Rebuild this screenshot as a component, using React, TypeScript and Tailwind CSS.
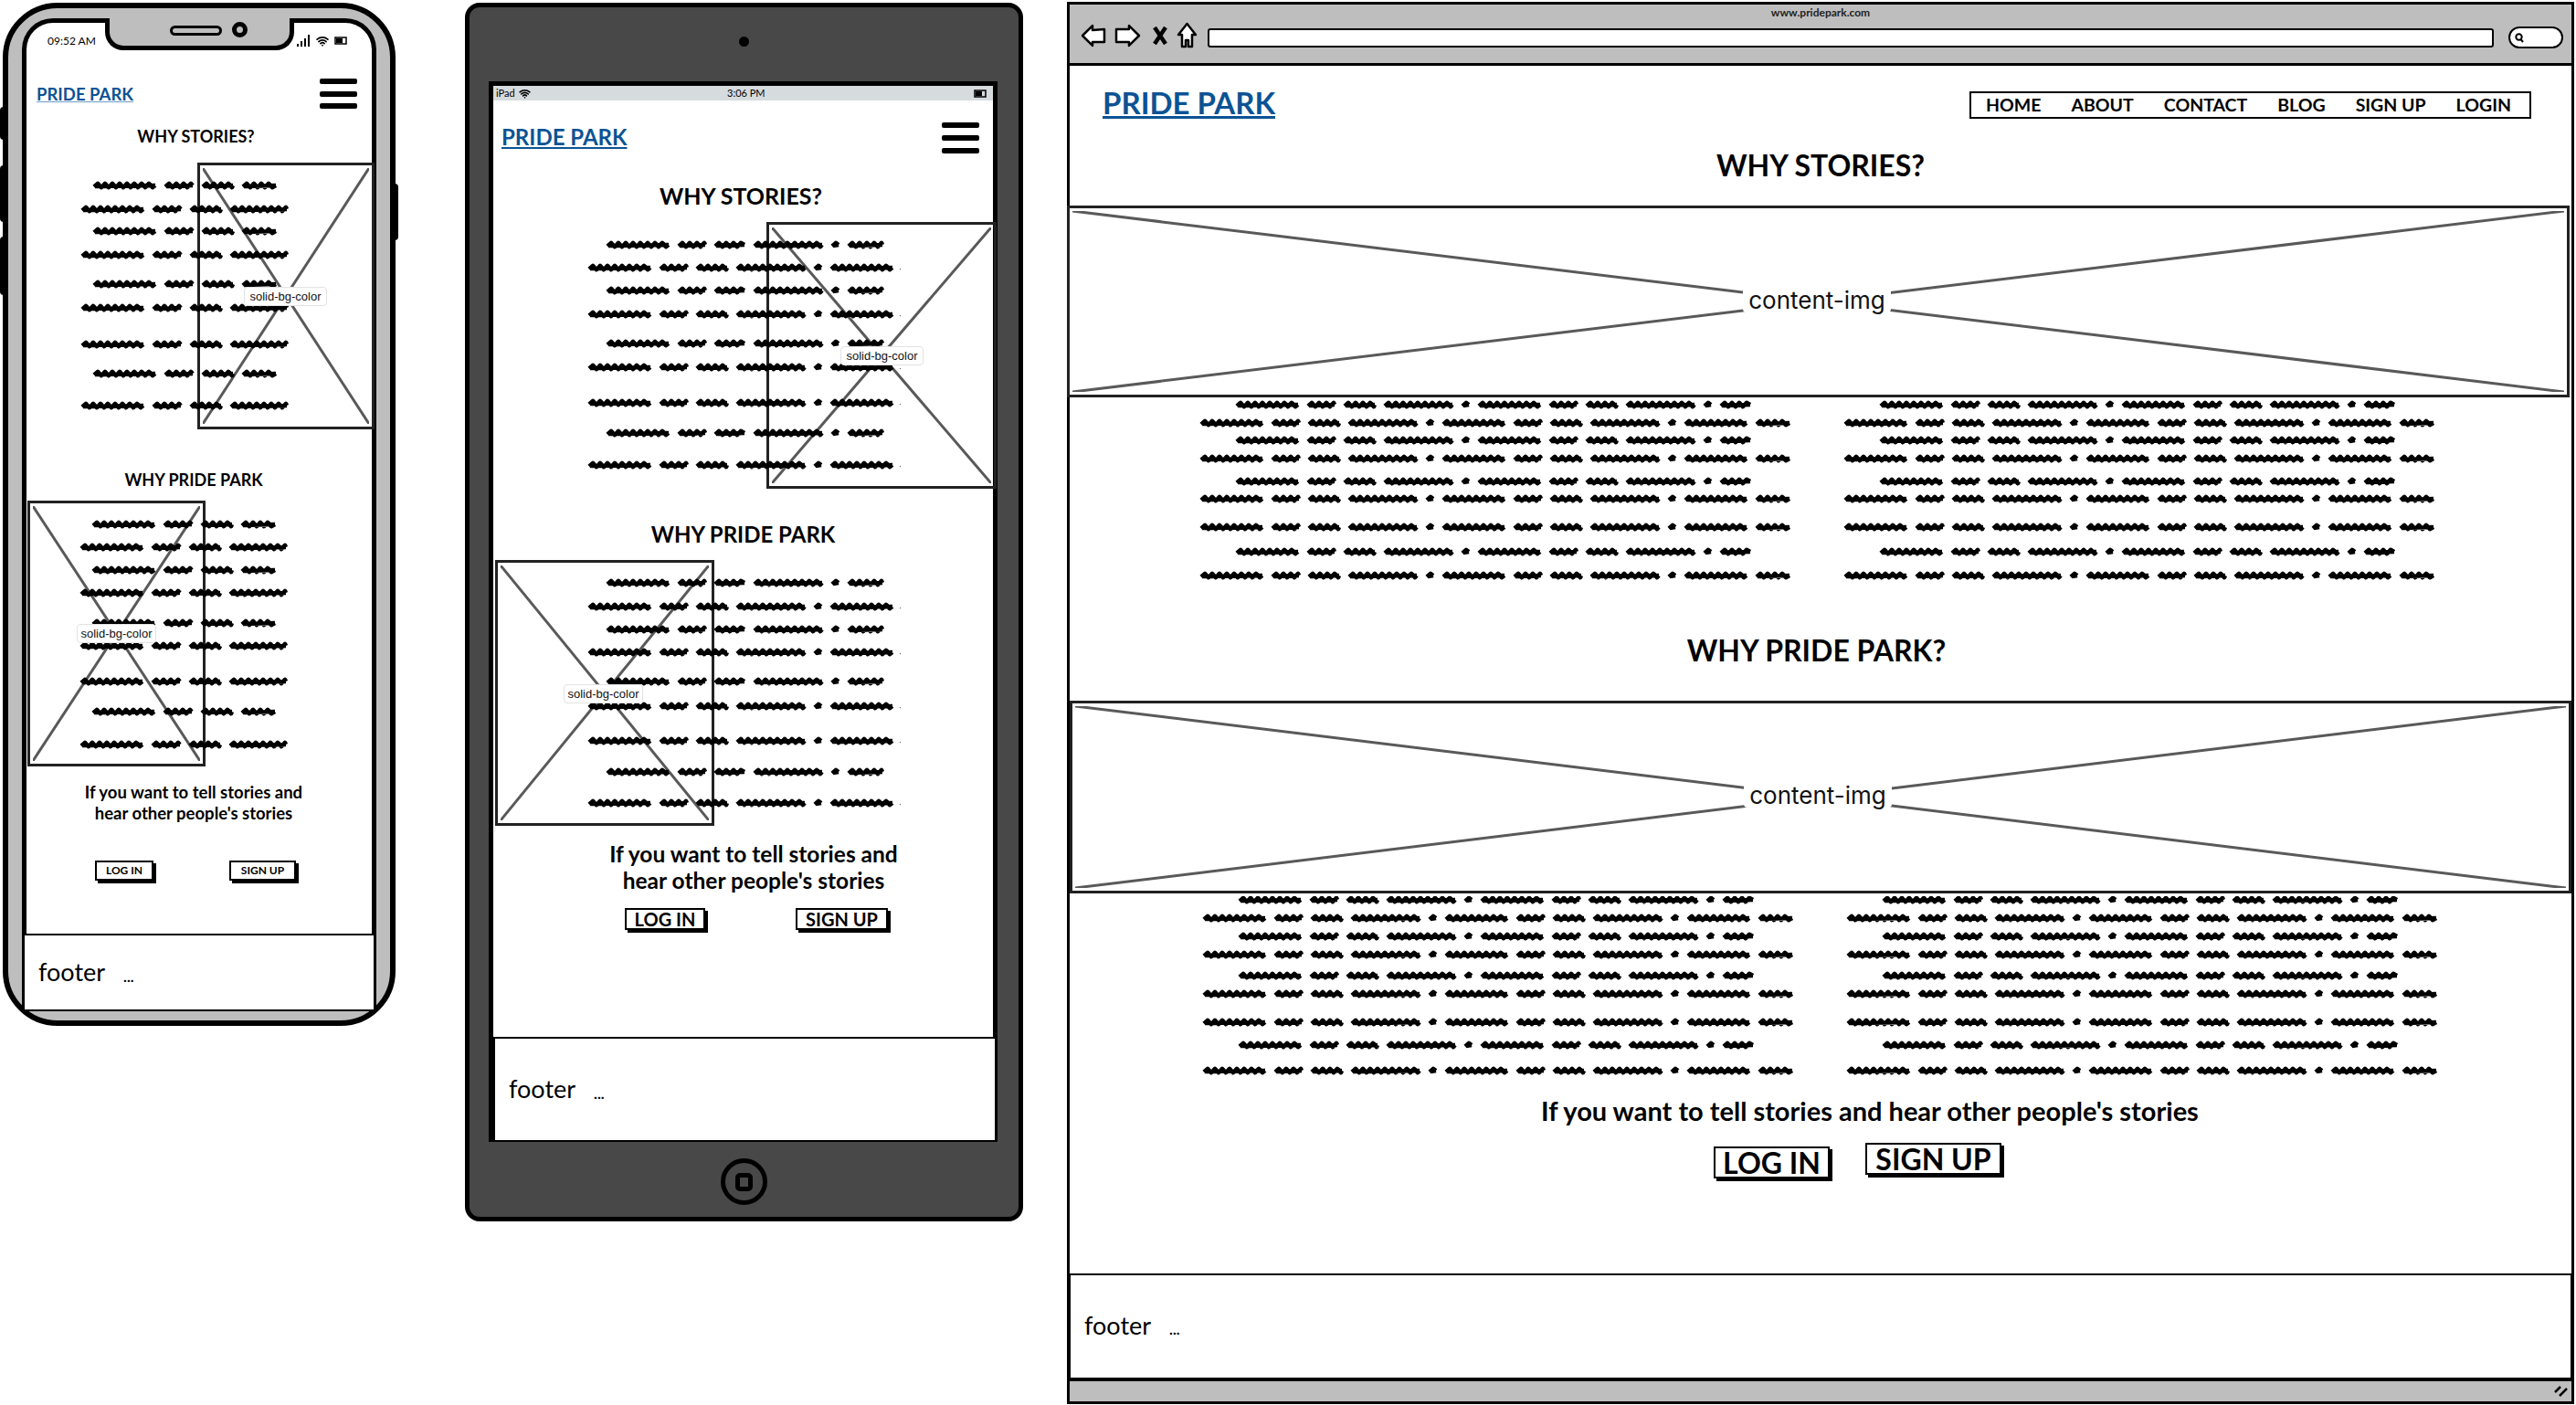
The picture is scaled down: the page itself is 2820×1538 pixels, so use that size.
import { Wifi } from "lucide-react";

const sketch = "font-['Lato',sans-serif]";

const phoneShort = [71, 34, 37, 40];
const phoneLong = [71, 34, 37, 65];
const tabletShort = [71, 33, 36, 78, 11, 41];
const tabletLong = [71, 33, 37, 78, 11, 71, 3];
const webShort = [71, 33, 37, 78, 11, 71, 33, 37, 78, 11, 36];
const webLong = [71, 33, 37, 78, 11, 71, 33, 37, 78, 11, 71, 40];

type ScribbleLine = { y: number; x: number; words: number[] };

// every other line of the greeked text is shorter
const makeLines = (ys: number[], shortX: number, short: number[], long: number[], longAt: number[]) =>
  ys.map((y, i): ScribbleLine =>
    longAt.includes(i) ? { y, x: 0, words: long } : { y, x: shortX, words: short },
  );

const wordPath = (x: number, y: number, w: number) => {
  let d = `M${x} ${y + 1.5}`;
  let up = true;
  for (let p = x + 4; p < x + w; p += 4) {
    d += ` L${p} ${y + (up ? -2.2 : 2.2)}`;
    up = !up;
  }
  // flat stroke under the ticks makes the word read as one blob
  return `${d} L${x + w} ${y} M${x + 1} ${y + 1} L${x + w} ${y}`;
};

const Scribble = ({
  lines,
  width,
  height,
  className,
}: {
  lines: ScribbleLine[];
  width: number;
  height: number;
  className?: string;
}) => (
  <svg width={width} height={height} className={className} fill="none" stroke="#000" strokeWidth={4.5} strokeLinejoin="round">
    {lines.map((line) => {
      let x = line.x;
      return line.words.map((w) => {
        const d = wordPath(x + 2, line.y, w - 4);
        x += w + 7;
        return <path key={`${line.y}-${x}`} d={d} />;
      });
    })}
  </svg>
);

const Placeholder = ({
  label,
  className,
  labelClass,
}: {
  label: string;
  className: string;
  labelClass: string;
}) => (
  <div className={`border-[3px] border-[#222] ${className}`}>
    <svg className="absolute left-[3px] top-[3px] h-[calc(100%-6px)] w-[calc(100%-6px)]" viewBox="0 0 100 100" preserveAspectRatio="none" stroke="#595959" strokeWidth={3}>
      <line x1="0" y1="0" x2="100" y2="100" vectorEffect="non-scaling-stroke" />
      <line x1="100" y1="0" x2="0" y2="100" vectorEffect="non-scaling-stroke" />
    </svg>
    <span className={`absolute z-10 flex items-center justify-center whitespace-nowrap rounded-[4px] border border-[#e2e2e2] bg-white text-[#111] ${labelClass}`}>
      {label}
    </span>
  </div>
);

const Hamburger = ({ className }: { className: string }) => (
  <div className={`flex flex-col justify-between ${className}`}>
    <span className="h-[6px] rounded-[2px] bg-black" />
    <span className="h-[6px] rounded-[2px] bg-black" />
    <span className="h-[6px] rounded-[2px] bg-black" />
  </div>
);

const Logo = ({ className }: { className: string }) => (
  <a className={`font-bold text-[#0b5394] underline ${sketch} ${className}`}>PRIDE PARK</a>
);

const SketchButton = ({ label, className }: { label: string; className: string }) => (
  <button className={`flex items-center justify-center border-2 border-black bg-white font-bold text-black shadow-[3px_3px_0_#000] ${sketch} ${className}`}>
    {label}
  </button>
);

const Footer = ({ className, dots }: { className: string; dots: string }) => (
  <div className={`flex items-center border-2 border-black bg-white text-[27px] text-black ${sketch} ${className}`}>
    <span>footer</span>
    <span className={`self-center text-[16px] font-bold ${dots}`}>...</span>
  </div>
);

const Phone = () => {
  const first = makeLines([9, 35, 59, 85, 117, 143, 183, 215, 250], 13, phoneShort, phoneLong, [1, 3, 5, 6, 8]);
  const second = makeLines([10, 35, 60, 85, 118, 143, 182, 215, 251], 13, phoneShort, phoneLong, [1, 3, 5, 6, 8]);
  return (
    <div className="absolute left-[3px] top-[3px] h-[1120px] w-[430px] rounded-[60px] border-[6px] border-black bg-[#bebebe]">
      {/* side buttons */}
      <span className="absolute -left-[9px] top-[108px] h-[36px] w-[4px] rounded-l bg-black" />
      <span className="absolute -left-[9px] top-[172px] h-[62px] w-[4px] rounded-l bg-black" />
      <span className="absolute -left-[9px] top-[250px] h-[64px] w-[4px] rounded-l bg-black" />
      <span className="absolute -right-[9px] top-[192px] h-[62px] w-[4px] rounded-r bg-black" />

      {/* notch */}
      <div className="absolute left-[106px] top-[11px] z-10 flex h-[35px] w-[207px] items-start justify-center gap-[11px] rounded-b-[20px] border-[5px] border-t-0 border-black bg-[#bebebe] pl-[20px] pt-[8px]">
        <span className="h-[11px] w-[57px] rounded-full border-[3px] border-black bg-[#bebebe]" />
        <span className="-mt-[4px] size-[17px] rounded-full border-[5px] border-black bg-[#bebebe]" />
      </div>

      <div className="ml-[15px] mt-[11px] flex h-[1087px] w-[388px] flex-col rounded-t-[34px] border-[5px] border-b-0 border-black bg-white">
        {/* status bar */}
        <div className="flex h-[38px] items-center justify-between pl-[23px] pr-[26px] pt-[1px] text-black">
          <span className={`text-[12px] ${sketch}`}>09:52 AM</span>
          <div className="flex items-center gap-[6px]">
            <svg width="15" height="13" viewBox="0 0 15 13" fill="#000">
              <rect x="0" y="10" width="2" height="3" />
              <rect x="4" y="7" width="2" height="6" />
              <rect x="8" y="4" width="2" height="9" />
              <rect x="12" y="0" width="2" height="13" />
            </svg>
            <Wifi size={14} strokeWidth={3} />
            <svg width="15" height="9" viewBox="0 0 15 9" fill="none" stroke="#000" strokeWidth="1.5">
              <rect x="1" y="1" width="12" height="7" />
              <rect x="2" y="2" width="7" height="5" fill="#000" stroke="none" />
            </svg>
          </div>
        </div>

        <div className="mt-[23px] flex items-center justify-between pl-[11px] pr-[16px]">
          <Logo className="text-[18.5px] leading-[24px] decoration-[#6d9bc8]" />
          <Hamburger className="h-[33px] w-[41px]" />
        </div>

        <h2 className={`mt-[18px] pr-[7px] text-center text-[18px] font-bold leading-[24px] text-black ${sketch}`}>WHY STORIES?</h2>
        <div className="relative">
          <Placeholder label="solid-bg-color" className="absolute left-[187px] top-[17px] h-[292px] w-[194px]" labelClass="left-[48px] top-[133px] h-[21px] w-[91px] font-['Liberation_Sans',sans-serif] text-[13px]" />
          <Scribble lines={first} width={240} height={260} className="relative ml-[59px] mt-[33px]" />
        </div>

        <h2 className={`mt-[59px] pr-[12px] text-center text-[18px] font-bold leading-[24px] text-black ${sketch}`}>WHY PRIDE PARK</h2>
        <div className="relative">
          <Placeholder label="solid-bg-color" className="absolute left-[1px] top-[11px] h-[291px] w-[195px]" labelClass="left-[51px] top-[132px] h-[21px] w-[87px] font-['Liberation_Sans',sans-serif] text-[13px]" />
          <Scribble lines={second} width={240} height={260} className="relative ml-[58px] mt-[27px]" />
        </div>

        <p className={`mt-[32px] pr-[12px] text-center text-[18.5px] font-bold leading-[23px] text-black ${sketch}`}>
          If you want to tell stories and
          <br />
          hear other people's stories
        </p>

        <div className="ml-[75px] mt-[40px] flex gap-[83px]">
          <SketchButton label="LOG IN" className="h-[22px] w-[64px] text-[12px]" />
          <SketchButton label="SIGN UP" className="h-[22px] w-[73px] text-[12px]" />
        </div>

        <Footer className="-mx-[4px] mt-auto h-[85px] pl-[15px]" dots="ml-[20px] mt-[8px]" />
      </div>
    </div>
  );
};

const Tablet = () => {
  const first = makeLines([6, 31, 56, 82, 114, 140, 179, 212, 247], 20, tabletShort, tabletLong, [1, 3, 5, 6, 8]);
  const second = makeLines([6, 32, 57, 82, 114, 141, 179, 213, 247], 20, tabletShort, tabletLong, [1, 3, 5, 6, 8]);
  return (
    <div className="absolute left-[509px] top-[3px] flex h-[1334px] w-[611px] flex-col rounded-[16px] border-[5px] border-black bg-[#484848]">
      <span className="mx-auto mt-[32px] size-[11px] rounded-full bg-black" />

      <div className="ml-[21px] mt-[38px] flex h-[1161px] w-[557px] flex-col border-[5px] border-b-0 border-black bg-white">
        {/* status bar */}
        <div className="relative flex h-[16px] shrink-0 items-center justify-between bg-[#d6dbde] pl-[3px] pr-[6px] text-[11px] text-black">
          <div className="flex items-center gap-[4px]">
            <span className={sketch}>iPad</span>
            <Wifi size={13} strokeWidth={3} />
          </div>
          <span className={`absolute left-[256px] ${sketch}`}>3:06 PM</span>
          <svg width="15" height="9" viewBox="0 0 15 9" fill="none" stroke="#000" strokeWidth="1.5">
            <rect x="1" y="1" width="12" height="7" />
            <rect x="2" y="2" width="7" height="5" fill="#000" stroke="none" />
          </svg>
        </div>

        <div className="mt-[24px] flex items-center justify-between pl-[9px] pr-[15px]">
          <Logo className="-mt-[3px] text-[24px] leading-[32px]" />
          <Hamburger className="h-[34px] w-[41px]" />
        </div>

        <h2 className={`mt-[30px] pr-[5px] text-center text-[25px] font-bold leading-[32px] text-black ${sketch}`}>WHY STORIES?</h2>
        <div className="relative">
          <Placeholder label="solid-bg-color" className="absolute left-[299px] top-[13px] h-[292px] w-[252px]" labelClass="left-[78px] top-[133px] h-[21px] w-[91px] font-['Liberation_Sans',sans-serif] text-[13px]" />
          <Scribble lines={first} width={343} height={256} className="relative ml-[103px] mt-[32px]" />
        </div>

        <h2 className={`mt-[51px] text-center text-[24px] font-bold leading-[32px] text-black ${sketch}`}>WHY PRIDE PARK</h2>
        <div className="relative">
          <Placeholder label="solid-bg-color" className="absolute left-[2px] top-[12px] h-[291px] w-[240px]" labelClass="left-[72px] top-[133px] h-[21px] w-[87px] font-['Liberation_Sans',sans-serif] text-[13px]" />
          <Scribble lines={second} width={343} height={256} className="relative ml-[103px] mt-[31px]" />
        </div>

        <p className={`mt-[32px] pl-[23px] text-center text-[24.5px] font-bold leading-[29px] text-black ${sketch}`}>
          If you want to tell stories and
          <br />
          hear other people's stories
        </p>

        <div className="ml-[144px] mt-[16px] flex gap-[99px]">
          <SketchButton label="LOG IN" className="h-[24px] w-[88px] text-[20px]" />
          <SketchButton label="SIGN UP" className="h-[24px] w-[101px] text-[20px]" />
        </div>

        <Footer className="mt-auto h-[115px] w-[551px] shrink-0 pl-[15px]" dots="ml-[20px] mt-[8px]" />
      </div>

      {/* home button */}
      <div className="mx-auto mt-[18px] flex size-[51px] items-center justify-center rounded-full border-[5px] border-black">
        <span className="h-[20px] w-[19px] rounded-[5px] border-[5px] border-black" />
      </div>
    </div>
  );
};

const navItems = ["HOME", "ABOUT", "CONTACT", "BLOG", "SIGN UP", "LOGIN"];

const Browser = () => {
  const first = makeLines([5, 25, 44, 64, 89, 108, 139, 166, 192], 39, webShort, webLong, [1, 3, 5, 6, 8]);
  const second = makeLines([4, 24, 44, 64, 87, 107, 138, 163, 191], 39, webShort, webLong, [1, 3, 5, 6, 8]);
  return (
    <div className="absolute left-[1168px] top-[2px] flex h-[1535px] w-[1650px] flex-col border-[3px] border-black bg-white">
      {/* toolbar */}
      <div className="h-[67px] shrink-0 border-b-[3px] border-black bg-[#bebebe]">
        <div className={`flex h-[17px] items-center justify-center text-[12px] font-bold text-[#222] ${sketch}`}>www.pridepark.com</div>
        <div className="flex items-center pl-[12px] pr-[9px] pt-[2px]">
          <svg width="28" height="26" viewBox="0 0 28 26" fill="#fff" stroke="#000" strokeWidth="2.5" strokeLinejoin="round">
            <path d="M2 13 L13 2 L13 7 L26 6 L26 20 L13 20 L13 24 Z" />
          </svg>
          <svg width="29" height="26" viewBox="0 0 29 26" fill="#fff" stroke="#000" strokeWidth="2.5" strokeLinejoin="round" className="ml-[9px]">
            <path d="M27 13 L16 2 L16 6 L2 6 L2 20 L16 20 L16 24 Z" />
          </svg>
          <svg width="18" height="20" viewBox="0 0 18 20" fill="none" stroke="#000" strokeWidth="4.5" className="ml-[12px]">
            <path d="M3 1 L15 19 M15 1 L3 19" />
          </svg>
          <svg width="23" height="29" viewBox="0 0 23 29" fill="#fff" stroke="#000" strokeWidth="2.5" strokeLinejoin="round" className="ml-[9px]">
            <path d="M11.5 2 L21 14 L17 14 L17 27 L13 27 L13 20 L10 20 L10 27 L6 27 L6 14 L2 14 Z" />
          </svg>
          <div className="ml-[11px] mt-[5px] h-[21px] w-[1411px] rounded-[3px] border-[2px] border-black bg-white" />
          <div className="ml-[16px] mt-[5px] flex h-[24px] w-[60px] items-center rounded-full border-[2px] border-black bg-white pl-[5px]">
            <svg width="10" height="11" viewBox="0 0 10 11" fill="none" stroke="#000" strokeWidth="2">
              <circle cx="4.5" cy="4.5" r="3.2" />
              <path d="M6.5 7 L9 10" />
            </svg>
          </div>
        </div>
      </div>

      {/* header */}
      <div className="flex items-start justify-between pl-[36px] pr-[44px] pt-[28px]">
        <Logo className="text-[33px] leading-[24px]" />
        <nav className={`flex h-[30px] w-[615px] items-center justify-between border-2 border-black pl-[16px] pr-[20px] text-[19.5px] font-bold text-black ${sketch}`}>
          {navItems.map((item) => (
            <span key={item}>{item}</span>
          ))}
        </nav>
      </div>

      <h2 className={`mt-[31px] text-center text-[32px] font-bold leading-[40px] text-black ${sketch}`}>WHY STORIES?</h2>
      <Placeholder label="content-img" className="relative -ml-[3px] mt-[24px] h-[210px] w-[1645px] shrink-0" labelClass="left-[737px] top-[86px] h-[28px] w-[162px] border-transparent text-[26px] font-['Inter',sans-serif]" />

      <div className="ml-[142px] mt-[3px] flex gap-[57px]">
        <Scribble lines={first} width={648} height={200} />
        <Scribble lines={first} width={648} height={200} />
      </div>

      <h2 className={`mt-[54px] pr-[9px] text-center text-[32px] font-bold leading-[40px] text-black ${sketch}`}>WHY PRIDE PARK?</h2>
      <Placeholder label="content-img" className="relative mt-[35px] h-[211px] w-[1644px] shrink-0" labelClass="left-[735px] top-[86px] h-[28px] w-[162px] border-transparent text-[26px] font-['Inter',sans-serif]" />

      <div className="ml-[145px] mt-[3px] flex gap-[57px]">
        <Scribble lines={second} width={648} height={200} />
        <Scribble lines={second} width={648} height={200} />
      </div>

      <p className={`ml-[516px] mt-[17px] text-[29px] font-bold leading-[36px] text-black ${sketch}`}>
        If you want to tell stories and hear other people's stories
      </p>

      <div className="ml-[705px] mt-[17px] flex items-start gap-[39px]">
        <SketchButton label="LOG IN" className="mt-[4px] h-[35px] w-[127px] text-[32px]" />
        <SketchButton label="SIGN UP" className="h-[35px] w-[149px] text-[32px]" />
      </div>

      <Footer className="-mx-[1px] mt-auto h-[116px] shrink-0 pb-[2px] pl-[15px]" dots="ml-[20px] mt-[8px]" />

      {/* bottom bar */}
      <div className="flex h-[24px] shrink-0 items-center justify-end border-t-[2px] border-black bg-[#bebebe] pr-[3px]">
        <svg width="16" height="12" viewBox="0 0 16 12" fill="none" stroke="#000" strokeWidth="2.5">
          <path d="M1 7 L7 1 M6 11 L14 3" />
        </svg>
      </div>
    </div>
  );
};

export default function App() {
  return (
    <div className="relative h-[1538px] w-[2820px] overflow-hidden bg-white">
      <Phone />
      <Tablet />
      <Browser />
    </div>
  );
}
